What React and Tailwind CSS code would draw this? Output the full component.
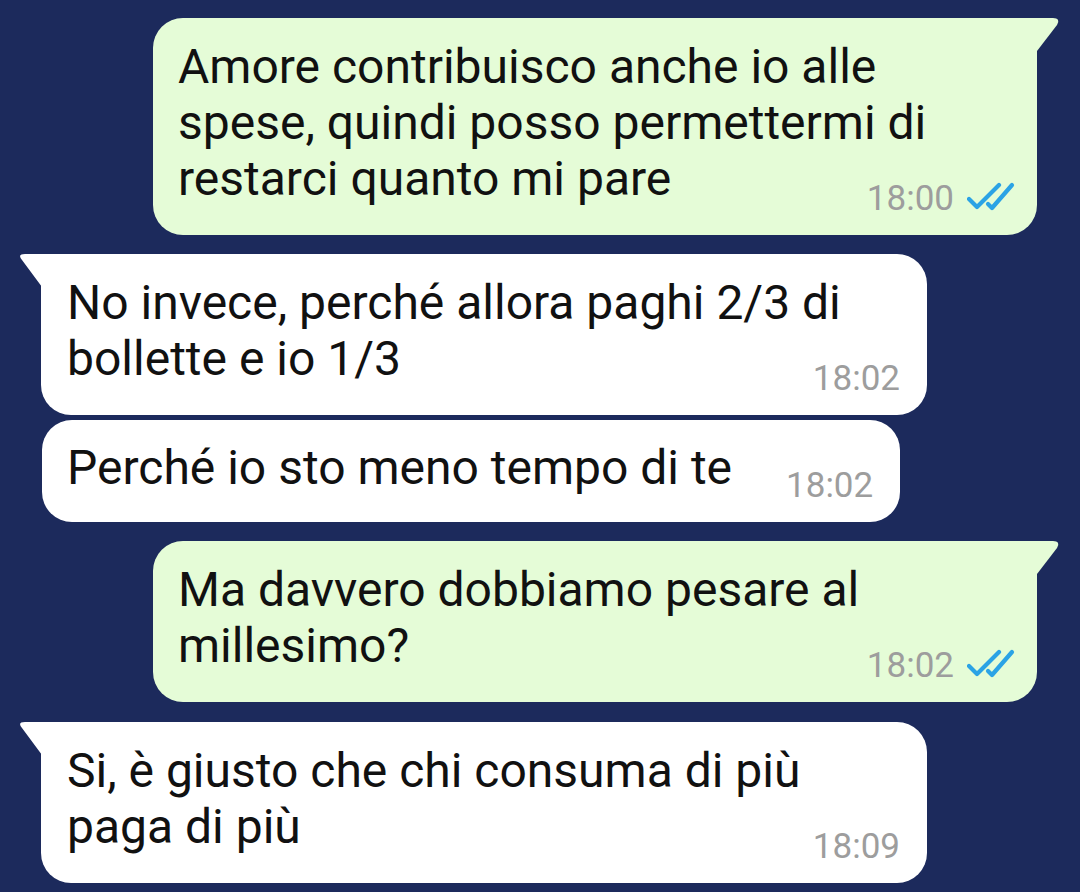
import React from "react";

function Ticks() {
  return (
    <svg width="48" height="30" viewBox="0 0 48 30" fill="none" stroke="#2ba3e5" strokeWidth="4.2" strokeLinecap="round" strokeLinejoin="round">
      <path d="M2 17 L10 25 L32 3" />
      <path d="M21 22 L25 26 L45 3" />
    </svg>
  );
}

function TailOut() {
  return (
    <svg className="absolute top-0 right-[-24px]" width="26" height="34" viewBox="0 0 26 34">
      <path d="M0 0 H18 Q26 0 22 7 L2 33 L0 34 Z" fill="#e5fcd7" />
    </svg>
  );
}

function TailIn() {
  return (
    <svg className="absolute top-0 left-[-22px]" width="24" height="34" viewBox="0 0 24 34">
      <path d="M24 0 H6 Q-2 0 3 6 L23 33 L24 34 Z" fill="#ffffff" />
    </svg>
  );
}

function Out({ lines, time }) {
  return (
    <div className="relative ml-[153px] w-[884px] rounded-[30px] rounded-tr-none bg-[#e5fcd7] pl-[25px] pr-[22px] pt-[21px] pb-[16px]">
      <TailOut />
      <div className="text-[48px] leading-[56px] text-[#111111]">
        {lines.map((l, i) => (
          <div key={i} className="whitespace-nowrap">{l}</div>
        ))}
      </div>
      <div className="mt-[-28px] flex h-[40px] items-center justify-end gap-[13px]">
        <span className="text-[35px] leading-[40px] text-[#9d9d9d]">{time}</span>
        <span className="mt-[-4px]"><Ticks /></span>
      </div>
    </div>
  );
}

function In({ lines, time }) {
  return (
    <div className="relative ml-[41px] w-[886px] rounded-[30px] rounded-tl-none bg-white pl-[26px] pr-[27px] pt-[21px] pb-[16px]">
      <TailIn />
      <div className="text-[48px] leading-[56px] text-[#111111]">
        {lines.map((l, i) => (
          <div key={i} className="whitespace-nowrap">{l}</div>
        ))}
      </div>
      <div className="mt-[-28px] flex h-[40px] items-center justify-end">
        <span className="text-[35px] leading-[40px] text-[#9d9d9d]">{time}</span>
      </div>
    </div>
  );
}

function InShort({ text, time }) {
  return (
    <div className="ml-[42px] flex w-fit items-start gap-[54px] rounded-[30px] bg-white pl-[25px] pr-[27px] pt-[20px] pb-[16px]">
      <div className="whitespace-nowrap text-[48px] leading-[56px] text-[#111111]">{text}</div>
      <span className="mt-[26px] text-[35px] leading-[40px] text-[#9d9d9d]">{time}</span>
    </div>
  );
}

export default function App() {
  return (
    <div className="flex h-[892px] w-[1080px] flex-col overflow-hidden bg-[#1c2a5c] pt-[18px] font-['Roboto',sans-serif]">
      <Out
        lines={["Amore contribuisco anche io alle", "spese, quindi posso permettermi di", "restarci quanto mi pare"]}
        time="18:00"
      />
      <div className="mt-[19px]">
        <In lines={["No invece, perché allora paghi 2/3 di", "bollette e io 1/3"]} time="18:02" />
      </div>
      <div className="mt-[5px]">
        <InShort text="Perché io sto meno tempo di te" time="18:02" />
      </div>
      <div className="mt-[19px]">
        <Out lines={["Ma davvero dobbiamo pesare al", "millesimo?"]} time="18:02" />
      </div>
      <div className="mt-[20px]">
        <In lines={["Si, è giusto che chi consuma di più", "paga di più"]} time="18:09" />
      </div>
    </div>
  );
}
